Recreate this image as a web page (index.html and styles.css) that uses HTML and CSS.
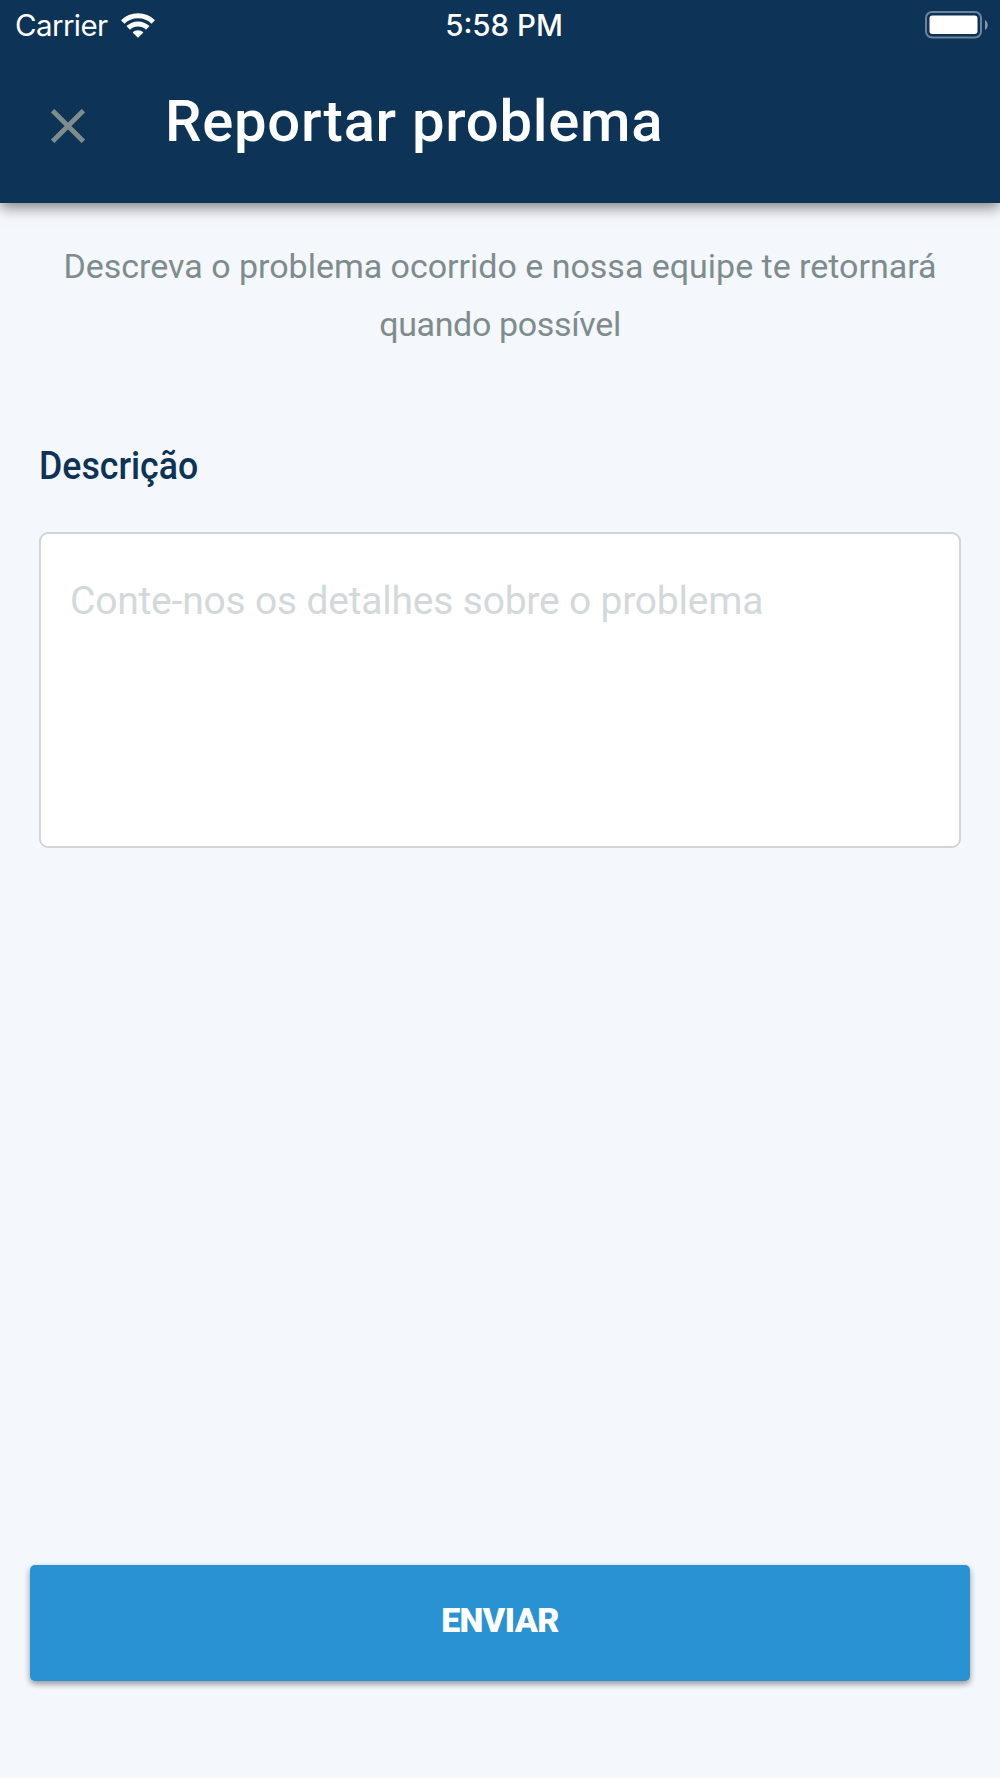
FILE: index.html
```html
<!DOCTYPE html>
<html lang="pt-BR">
<head>
<meta charset="utf-8">
<title>Reportar problema</title>
<link rel="stylesheet" href="styles.css">
</head>
<body>
<div class="screen">
  <header class="header">
    <div class="status">
      <div class="status-left"><span class="carrier">Carrier</span>
        <svg class="wifi" width="34" height="25" viewBox="0 0 34 25" fill="none" stroke="#fff" stroke-width="5">
          <path d="M1.700 9C10 .6 24 .6 32.300 9"/>
          <path d="M7.200 14.900c5.500-5.300 14.100-5.300 19.600 0"/>
          <path d="M17 24.800l-5.400-5.300c2.900-3 7.900-3 10.800 0z" fill="#fff" stroke="none"/>
        </svg>
      </div>
      <span class="time">5:58 PM</span>
      <svg class="battery" width="64" height="28" viewBox="0 0 64 28">
        <rect x="1" y="1" width="55" height="25.500" rx="6" fill="none" stroke="#fff" stroke-opacity=".4" stroke-width="2"/>
        <rect x="4.500" y="4.500" width="48" height="18.500" rx="3" fill="#fff"/>
        <path d="M60 9c3.600 2 3.600 8 0 10z" fill="#fff" fill-opacity=".5"/>
      </svg>
    </div>
    <div class="nav">
      <svg class="close" width="34" height="34" viewBox="0 0 34 34" stroke="#7f8c8d" stroke-width="4.800"><path d="M1.600 1.600l30.800 30.800M32.400 1.600L1.600 32.400"/></svg>
      <h1 class="title">Reportar problema</h1>
    </div>
  </header>
  <main class="content">
    <p class="intro">Descreva o problema ocorrido e nossa equipe te retornará<br><span class="intro-end">quando possível</span></p>
    <label class="label" for="description"><span>Descrição</span></label>
    <textarea class="field" id="description" placeholder="Conte-nos os detalhes sobre o problema"></textarea>
    <button class="send" type="button">ENVIAR</button>
  </main>
</div>
</body>
</html>
```
FILE: styles.css
```css
* { box-sizing: border-box; }
body { margin: 0; background: #f4f7fc; font-family: Roboto, "Liberation Sans", sans-serif; }
.screen { display: flex; flex-direction: column; height: 1778px; }
.header { height: 203px; flex: none; background: #0d3356; color: #fff; box-shadow: 0 4px 14px rgba(0, 0, 0, .5); }
.status { display: grid; grid-template-columns: 1fr auto 1fr; height: 50px; padding: 0 11px 0 15px; align-items: center; font: 400 29.500px/50px Inter, sans-serif; }
.status-left { display: flex; align-items: center; gap: 13px; }
.carrier { letter-spacing: -.6px; }
.time { font-weight: 500; padding-left: 4px; }
.battery { justify-self: end; }
.nav { display: flex; align-items: flex-start; padding: 37px 0 0 51px; }
.close { margin-top: 22px; margin-right: 80px; }
.title { margin: 0; font-size: 58px; line-height: 68px; font-weight: 500; letter-spacing: .72px; }
.content { flex: 1; display: flex; flex-direction: column; padding: 34px 30px 97px; }
.intro { margin: 0; text-align: center; font-size: 34px; line-height: 58px; font-weight: 400; letter-spacing: -.02px; color: #7f8c8d; }
.intro-end { letter-spacing: -.35px; }
.label { margin: 90px 9px 0; font-size: 39px; line-height: 46px; font-weight: 500; color: #0d3356; }
.label span { display: inline-block; transform: scaleX(.915); transform-origin: left; }
.field { height: 316px; margin: 43px 9px 0; padding: 44px 29px; border: 2px solid #d0d6d8; border-radius: 9px; background: #fff; resize: none; font: 400 39px/46px Roboto, sans-serif; letter-spacing: -.2px; }
.field::placeholder { color: #d3d9da; opacity: 1; }
.send { height: 116px; margin-top: auto; padding: 0 0 7px; border: 0; border-radius: 5px; background: #2892d3; color: #fff; font: 900 34px/1 Roboto, sans-serif; letter-spacing: -.6px; box-shadow: 0 3px 6px rgba(0, 0, 0, .4); }
```
